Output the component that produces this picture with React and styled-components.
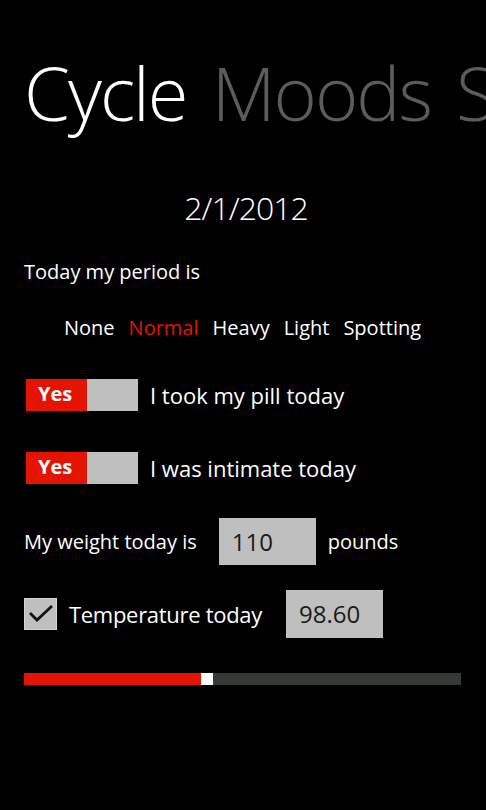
import styled, { createGlobalStyle } from "styled-components";

const GlobalStyle = createGlobalStyle`
  html, body {
    margin: 0;
    padding: 0;
    background: #000;
  }
  body {
    font-family: "Open Sans", "Noto Sans", sans-serif;
    color: #fff;
  }
`;

const Page = styled.div`
  width: 486px;
  height: 810px;
  overflow: hidden;
  background: #000;
  padding: 0 24px;
  box-sizing: border-box;
  display: flex;
  flex-direction: column;
`;

const Title = styled.div`
  margin-top: 43px;
  height: 100px;
  line-height: 100px;
  font-size: 74px;
  font-weight: 300;
  white-space: nowrap;
  margin-right: -24px;
  overflow: hidden;
  letter-spacing: -2px;
  word-spacing: 8px;

  span {
    color: #5c5c5c;
  }
`;

const DateText = styled.div`
  margin-top: 45px;
  height: 40px;
  line-height: 40px;
  font-size: 32px;
  font-weight: 300;
  letter-spacing: -1px;
  text-align: center;
  padding-left: 6px;
`;

const Label = styled.div`
  margin-top: 30px;
  height: 28px;
  line-height: 28px;
  font-size: 20px;
`;

const Options = styled.div`
  margin-top: 28px;
  height: 28px;
  line-height: 28px;
  display: flex;
  gap: 14px;
  padding-left: 40px;
  font-size: 20px;
`;

const Option = styled.span`
  color: ${(p) => (p.$active ? "#e51400" : "#fff")};
`;

const ToggleRow = styled.div`
  margin-top: ${(p) => p.$top}px;
  height: 32px;
  display: flex;
  align-items: center;
  gap: 12px;
  padding-left: 2px;
`;

const Toggle = styled.div`
  width: 112px;
  height: 32px;
  display: flex;
  box-sizing: border-box;
`;

const ToggleOn = styled.div`
  width: 61px;
  background: #e51400;
  color: #fff;
  font-weight: 700;
  font-size: 20px;
  line-height: 30px;
  padding-left: 12px;
  box-sizing: border-box;
`;

const ToggleOff = styled.div`
  flex: 1;
  background: #bfbfbf;
`;

const RowText = styled.span`
  font-size: 22px;
  white-space: nowrap;
`;

const FieldRow = styled.div`
  margin-top: ${(p) => p.$top}px;
  height: ${(p) => p.$h}px;
  display: flex;
  align-items: center;
`;

const SmallText = styled.span`
  font-size: 20px;
  white-space: nowrap;
`;

const Box = styled.div`
  width: 97px;
  height: ${(p) => p.$h}px;
  background: #bfbfbf;
  color: #1a1a1a;
  font-size: 24px;
  line-height: ${(p) => p.$h}px;
  padding-left: 13px;
  box-sizing: border-box;
  margin-left: ${(p) => p.$ml}px;
  margin-right: 12px;
`;

const Check = styled.div`
  width: 33px;
  height: 32px;
  background: #bfbfbf;
  border: 1px solid #d4d4d4;
  box-sizing: border-box;
  margin-right: 12px;
  display: flex;
  align-items: center;
  justify-content: center;
`;

const TempText = styled.span`
  font-size: 22px;
  letter-spacing: -0.3px;
  white-space: nowrap;
`;

const Slider = styled.div`
  margin-top: 35px;
  height: 12px;
  width: 437px;
  display: flex;
  background: #363a36;
`;

const SliderFill = styled.div`
  background: #e51400;
`;

const Thumb = styled.div`
  width: 12px;
  background: #fff;
`;

export default function App() {
  const periods = ["None", "Normal", "Heavy", "Light", "Spotting"];
  return (
    <>
      <GlobalStyle />
      <Page>
        <Title>
          Cycle <span>Moods Symptoms</span>
        </Title>
        <DateText>2/1/2012</DateText>
        <Label>Today my period is</Label>
        <Options>
          {periods.map((p) => (
            <Option key={p} $active={p === "Normal"}>
              {p}
            </Option>
          ))}
        </Options>
        <ToggleRow $top={37}>
          <Toggle>
            <ToggleOn>Yes</ToggleOn>
            <ToggleOff />
          </Toggle>
          <RowText>I took my pill today</RowText>
        </ToggleRow>
        <ToggleRow $top={41}>
          <Toggle>
            <ToggleOn>Yes</ToggleOn>
            <ToggleOff />
          </Toggle>
          <RowText>I was intimate today</RowText>
        </ToggleRow>
        <FieldRow $top={34} $h={47}>
          <SmallText>My weight today is</SmallText>
          <Box $h={47} $ml={22}>
            110
          </Box>
          <SmallText>pounds</SmallText>
        </FieldRow>
        <FieldRow $top={25} $h={48}>
          <Check>
            <svg width="26" height="20" viewBox="0 0 26 20">
              <path d="M2 9 L9 16 L24 2" fill="none" stroke="#111" strokeWidth="2.8" />
            </svg>
          </Check>
          <TempText>Temperature today</TempText>
          <Box $h={48} $ml={24}>
            98.60
          </Box>
        </FieldRow>
        <Slider>
          <SliderFill style={{ width: 177 }} />
          <Thumb />
        </Slider>
      </Page>
    </>
  );
}
